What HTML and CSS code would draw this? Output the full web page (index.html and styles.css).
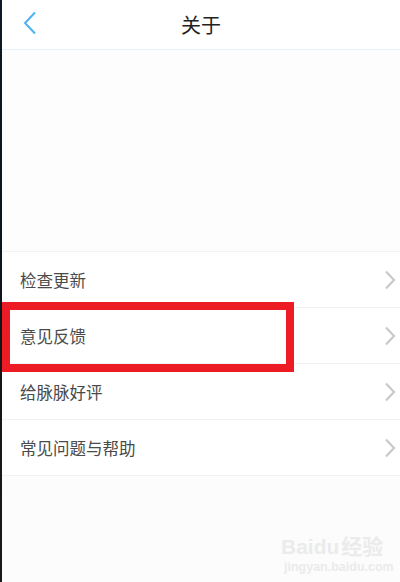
FILE: index.html
```html
<!DOCTYPE html>
<html lang="zh">
<head>
<meta charset="utf-8">
<link rel="stylesheet" href="styles.css">
</head>
<body>
<div class="frame">
  <div class="edge"></div>
  <div class="screen">
    <header class="topbar">
      <svg class="back" width="14" height="24" viewBox="0 0 14 24"><path d="M12 1.5 L2 12 L12 22.5" fill="none" stroke="#4cb3f2" stroke-width="2"/></svg>
      <h1 class="title">关于</h1>
    </header>
    <div class="hero"></div>
    <ul class="list">
      <li class="row"><span>检查更新</span><svg class="chev" width="12" height="20" viewBox="0 0 12 20"><path d="M2 1.5 L10 10 L2 18.5" fill="none" stroke="#c9c9c9" stroke-width="2.2"/></svg></li>
      <li class="row"><span>意见反馈</span><svg class="chev" width="12" height="20" viewBox="0 0 12 20"><path d="M2 1.5 L10 10 L2 18.5" fill="none" stroke="#c9c9c9" stroke-width="2.2"/></svg></li>
      <li class="row"><span>给脉脉好评</span><svg class="chev" width="12" height="20" viewBox="0 0 12 20"><path d="M2 1.5 L10 10 L2 18.5" fill="none" stroke="#c9c9c9" stroke-width="2.2"/></svg></li>
      <li class="row"><span>常见问题与帮助</span><svg class="chev" width="12" height="20" viewBox="0 0 12 20"><path d="M2 1.5 L10 10 L2 18.5" fill="none" stroke="#c9c9c9" stroke-width="2.2"/></svg></li>
    </ul>
    <div class="foot">
      <div class="watermark">
        <div class="wm-logo">Bai<span class="wm-du">du</span>经验</div>
        <div class="wm-url">jingyan.baidu.com</div>
      </div>
    </div>
    <div class="highlight"></div>
  </div>
</div>
</body>
</html>
```
FILE: styles.css
```css
html, body {
  margin: 0;
  padding: 0;
  width: 400px;
  height: 582px;
  overflow: hidden;
  background: #fcfcfc;
  font-family: "Noto Sans CJK SC", "Noto Sans", sans-serif;
}
.frame {
  display: flex;
  height: 582px;
}
.edge {
  width: 2px;
  flex: none;
  background: linear-gradient(#0b1a26 0%, #0a1520 40%, #141414 60%, #1a1a1a 100%);
}
.screen {
  position: relative;
  flex: 1;
  display: flex;
  flex-direction: column;
  background: #fdfdfd;
}
.topbar {
  height: 49px;
  flex: none;
  position: relative;
  display: flex;
  align-items: center;
  justify-content: center;
  background: #ffffff;
  border-bottom: 1px solid #eaf1f6;
}
.back {
  position: absolute;
  left: 21px;
  top: 11px;
}
.title {
  margin: 0;
  font-size: 20px;
  font-weight: 400;
  color: #222;
}
.hero {
  height: 201px;
  flex: none;
  background: #fdfdfd;
}
.list {
  list-style: none;
  margin: 0;
  padding: 0;
  background: #ffffff;
  border-top: 1px solid #f2f2f2;
}
.row {
  height: 55px;
  display: flex;
  align-items: center;
  justify-content: space-between;
  padding: 0 4px 0 18px;
  border-bottom: 1px solid #f2f2f2;
  font-size: 16.5px;
  color: #4a4a4a;
}
.row span {
  margin-top: 1px;
}
.foot {
  flex: 1;
  position: relative;
  background: #fcfcfc;
}
.watermark {
  position: absolute;
  left: 279px;
  top: 60px;
  color: #ebebeb;
  font-family: "Liberation Sans", "Noto Sans CJK SC", sans-serif;
}
.wm-logo {
  font-size: 21px;
  font-weight: 700;
  line-height: 22px;
}
.wm-du {
  margin-right: 2px;
}
.wm-url {
  font-size: 12.5px;
  font-weight: 700;
  line-height: 14px;
  margin-top: 2px;
  margin-left: 3px;
}
.highlight {
  position: absolute;
  left: 0;
  top: 302px;
  width: 276px;
  height: 54px;
  border: 8px solid #ed1c24;
}
```
